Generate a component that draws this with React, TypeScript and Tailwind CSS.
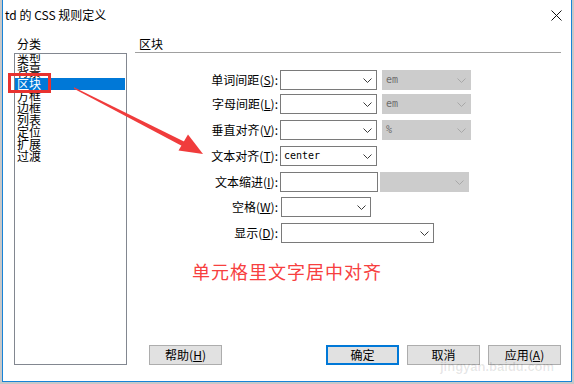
import React from "react";

const cjk = "font-['Noto_Sans_CJK_SC','Noto_Sans',sans-serif]";

function Chevron({ light }: { light?: boolean }) {
    return (
        <svg width="9" height="5" viewBox="0 0 9 5" className="shrink-0">
            <polyline points="0.5,0.5 4.5,4.5 8.5,0.5" fill="none" stroke={light ? "#a8a8a8" : "#3c3c3c"} strokeWidth="1" />
        </svg>
    );
}

function Select({ width, value, disabled, noArrow }: { width: string; value?: string; disabled?: boolean; noArrow?: boolean }) {
    return (
        <div
            className={`${width} h-[20px] flex items-center justify-between pl-[3px] pr-[4px] border ${
                disabled ? "bg-[#cccccc] border-[#cccccc] text-[#6d6d6d]" : "bg-white border-[#7a7a7a] text-black"
            }`}
        >
            <span className="font-['DejaVu_Sans_Mono',monospace] text-[10px] leading-[12px]">{value}</span>
            {!noArrow && <Chevron light={disabled} />}
        </div>
    );
}

function Label({ text, keyChar }: { text: string; keyChar: string }) {
    return (
        <div className={`w-[143px] text-right text-[12px] leading-[14px] text-black ${cjk}`}>
            {text}(<span className="underline underline-offset-1">{keyChar}</span>):
        </div>
    );
}

function Btn({ children, primary, className }: { children: React.ReactNode; primary?: boolean; className?: string }) {
    return (
        <div
            className={`w-[73px] h-[20px] flex items-center justify-center bg-[#e1e1e1] text-[12px] leading-[14px] text-black ${cjk} ${
                primary ? "border-2 border-[#0078d7]" : "border border-[#adadad]"
            } ${className ?? ""}`}
        >
            {children}
        </div>
    );
}

const categories = ["类型", "背景", "区块", "方框", "边框", "列表", "定位", "扩展", "过渡"];

export default function App() {
    return (
        <div className={`w-[574px] h-[384px] bg-[#c8c8c8] relative overflow-hidden ${cjk}`}>
            <div className="ml-[2px] w-[570px] h-[382px] bg-white border-x border-b border-[#1883d7] flex flex-col">
                {/* title bar */}
                <div className="h-[30px] flex items-center justify-between pl-[2px] pr-[9px] shrink-0">
                    <span className="text-[12px] leading-[14px] text-black">td 的 CSS 规则定义</span>
                    <svg width="11" height="11" viewBox="0 0 11 11">
                        <path d="M0.5 0.5 L10.5 10.5 M10.5 0.5 L0.5 10.5" stroke="#111" strokeWidth="1" />
                    </svg>
                </div>

                <div className="flex flex-1 min-h-0">
                    {/* left: categories */}
                    <div className="ml-[11px] w-[113px] flex flex-col pb-[16px]">
                        <div className="h-[23px] pt-[7px] pl-[3px] text-[12px] leading-[14px] text-black">分类</div>
                        <div className="flex-1 border border-[#828790] flex flex-col">
                            {categories.map((c) => (
                                <div
                                    key={c}
                                    className={`h-[12px] text-[12px] leading-[12px] pl-[2px] ${
                                        c === "区块" ? "bg-[#0078d7] text-white mr-[1px]" : "text-black"
                                    }`}
                                >
                                    {c}
                                </div>
                            ))}
                        </div>
                    </div>

                    {/* right: form */}
                    <div className="ml-[8px] w-[426px] flex flex-col pb-[16px]">
                        <div className="h-[23px] pt-[7px] pl-[4px] text-[12px] leading-[14px] text-black border-b border-[#a0a0a0] shrink-0">
                            区块
                        </div>

                        <div className="flex items-center gap-[2px] mt-[17px]">
                            <Label text="单词间距" keyChar="S" />
                            <Select width="w-[97px]" />
                            <div className="w-[1px]" />
                            <Select width="w-[89px]" value="em" disabled />
                        </div>
                        <div className="flex items-center gap-[2px] mt-[4px]">
                            <Label text="字母间距" keyChar="L" />
                            <Select width="w-[97px]" />
                            <div className="w-[1px]" />
                            <Select width="w-[89px]" value="em" disabled />
                        </div>
                        <div className="flex items-center gap-[2px] mt-[6px]">
                            <Label text="垂直对齐" keyChar="V" />
                            <Select width="w-[97px]" />
                            <div className="w-[1px]" />
                            <Select width="w-[89px]" value="%" disabled />
                        </div>
                        <div className="flex items-center gap-[2px] mt-[6px]">
                            <Label text="文本对齐" keyChar="T" />
                            <Select width="w-[97px]" value="center" />
                        </div>
                        <div className="flex items-center gap-[2px] mt-[6px]">
                            <Label text="文本缩进" keyChar="I" />
                            <Select width="w-[98px]" noArrow />
                            <Select width="w-[89px]" disabled />
                        </div>
                        <div className="flex items-center gap-[3px] mt-[5px]">
                            <Label text="空格" keyChar="W" />
                            <Select width="w-[90px]" />
                        </div>
                        <div className="flex items-center gap-[3px] mt-[6px]">
                            <Label text="显示" keyChar="D" />
                            <Select width="w-[153px]" />
                        </div>

                        <div className="mt-[18px] pl-[57px] text-[18px] leading-[20px] tracking-[1px] text-[#f7403f]">
                            单元格里文字居中对齐
                        </div>

                        <div className="flex-1" />

                        <div className="flex items-end">
                            <Btn className="ml-[14px]">
                                帮助(<span className="underline">H</span>)
                            </Btn>
                            <div className="flex-1" />
                            <div className="flex gap-[8px]">
                                <Btn primary>确定</Btn>
                                <Btn>取消</Btn>
                                <Btn>
                                    应用(<span className="underline">A</span>)
                                </Btn>
                            </div>
                        </div>
                    </div>
                </div>
            </div>

            {/* annotation: red box + arrow */}
            <div className="absolute left-[8px] top-[73px] w-[43px] h-[20px] border-[3px] border-[#e8322f]" />
            <svg className="absolute left-0 top-0 pointer-events-none" width="574" height="384">
                <polygon points="74,87.3 185,142 183,146.5 74,88.7" fill="#f03c3c" />
                <polygon points="203,154 178.5,150.5 188,134.5" fill="#f03c3c" />
            </svg>

            {/* watermark */}
            <div className="absolute left-[440px] top-[360px] text-[13px] leading-[14px] text-black/10 font-['Liberation_Sans',sans-serif] font-bold">
                jingyan.baidu.com
            </div>
        </div>
    );
}
